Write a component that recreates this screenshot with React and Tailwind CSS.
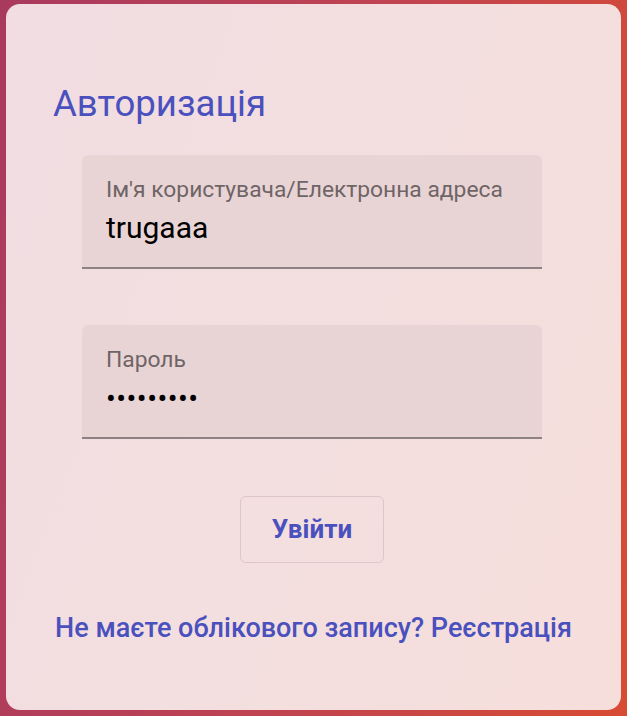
export default function App() {
  const font = { fontFamily: 'Roboto, "Noto Sans", sans-serif' };
  return (
    <div
      className="w-[627px] h-[716px] pl-[6px] pr-[6px] pt-[4px] pb-[6px] bg-[linear-gradient(100deg,#a93a5f_0%,#bf4352_50%,#d84b33_100%)]"
      style={font}
    >
      <div className="h-full w-full rounded-[14px] bg-[linear-gradient(110deg,#f1dde2_0%,#f3dfdf_50%,#f6dedb_100%)] flex flex-col">
        <h1 className="pl-[47px] pt-[76px] text-[36.6px] leading-[48px] font-normal text-[#4a50bd]">
          Авторизація
        </h1>
        <div className="mt-[27px] ml-[76px] w-[460px] h-[114px] rounded-t-[6px] bg-[#e9d4d5] border-b-2 border-[#8c8283] pl-[24px] pt-[22px]">
          <div className="text-[22.8px] leading-[26px] text-[#6f6466]">Ім'я користувача/Електронна адреса</div>
          <div className="mt-[7px] text-[30px] leading-[36px] text-black">trugaaa</div>
        </div>
        <div className="mt-[56px] ml-[76px] w-[460px] h-[114px] rounded-t-[6px] bg-[#e9d4d5] border-b-2 border-[#8c8283] pl-[24px] pt-[22px]">
          <div className="text-[22.8px] leading-[26px] text-[#6f6466]">Пароль</div>
          <div className="mt-[8px] text-[29px] leading-[36px] text-black tracking-[0.5px]">•••••••••</div>
        </div>
        <div className="mt-[57px] ml-[234px] flex">
          <button className="w-[144px] h-[67px] rounded-[6px] border border-[#dcc6c7] text-[26px] font-bold text-[#4a50bd]">
            Увійти
          </button>
        </div>
        <div className="mt-[50px] text-center text-[27px] leading-[30px] font-medium text-[#4a50bd]">
          Не маєте облікового запису? Реєстрація
        </div>
      </div>
    </div>
  );
}
